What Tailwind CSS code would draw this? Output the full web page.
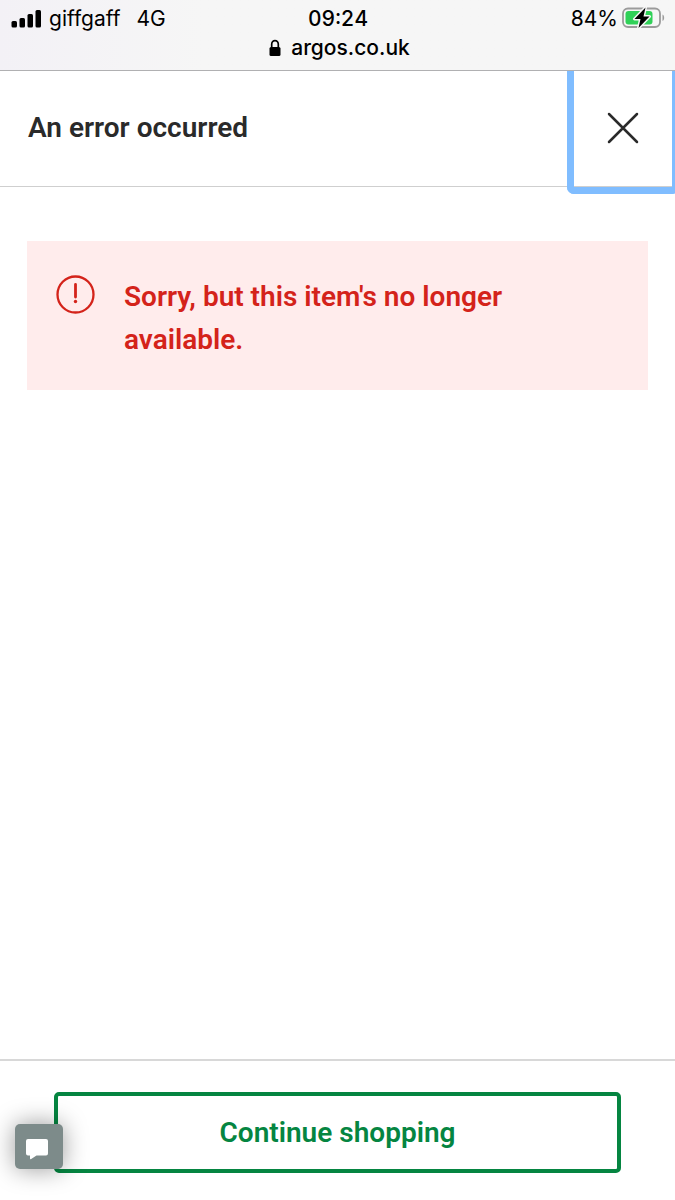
<!DOCTYPE html>
<html lang="en">
<head>
<meta charset="utf-8">
<meta name="viewport" content="width=device-width, initial-scale=1">
<title>An error occurred</title>
<script src="https://cdn.jsdelivr.net/npm/@tailwindcss/browser@4"></script>
</head>
<body class="flex min-h-screen flex-col overflow-x-hidden bg-white font-['Roboto',sans-serif] text-[#2a2a2a]">
  <!-- Phone status bar -->
  <div class="relative z-10 h-[71px] border-b border-[#b0b0b2] bg-linear-to-r from-[#f3f1f6] to-[#f6f6f6] to-30% pt-[5px] font-['Inter',sans-serif] text-black">
    <div class="grid grid-cols-3 items-center pr-[10px] pl-[11px] text-[21px] leading-7">
      <div class="flex items-center gap-2 whitespace-nowrap">
        <svg class="h-5 w-[30px] shrink-0 -mt-[3px]" viewBox="0 0 30 20" aria-hidden="true">
          <rect x="0.500" y="13" width="5.500" height="6.500" rx="1.500"/>
          <rect x="8.500" y="10" width="5.500" height="9.500" rx="1.500"/>
          <rect x="16.500" y="6" width="5.500" height="13.500" rx="1.500"/>
          <rect x="24.500" y="2" width="5.500" height="17.500" rx="1.500"/>
        </svg>
        <span>giffgaff</span>
        <span class="ml-2">4G</span>
      </div>
      <div class="text-center font-medium tabular-nums">09:24</div>
      <div class="flex items-center justify-end gap-[3px]">
        <span>84%</span>
        <svg class="h-6 w-[44px] shrink-0 -mt-[3px]" viewBox="0 0 44 24" role="img" aria-label="Charging">
          <rect x="2" y="2.500" width="37" height="18.500" rx="5" fill="none" stroke="#9b9b9b" stroke-width="1.800"/>
          <path d="M41.500 8.500c2.200.8 2.200 5.700 0 6.500z" fill="#9b9b9b"/>
          <rect x="4.500" y="5" width="27" height="13.500" rx="3" fill="#30d158"/>
          <path d="M24.500 1.500 13.500 13h6L17.500 22 28.500 10.500h-6z" fill="#000" stroke="#f6f6f6" stroke-width="3" stroke-linejoin="round" paint-order="stroke"/>
        </svg>
      </div>
    </div>
    <div class="flex items-center justify-center gap-[10px] pl-1 text-[21px] leading-[30px] font-medium">
      <svg class="h-[18px] w-3" viewBox="0 0 12 18" aria-hidden="true">
        <rect x="0.500" y="8" width="11" height="9" rx="1.500"/>
        <path d="M2.700 8V5.200a3.300 3.600 0 0 1 6.600 0V8" fill="none" stroke="#000" stroke-width="1.700"/>
      </svg>
      <span>argos.co.uk</span>
    </div>
  </div>

  <header class="flex h-[116px] border-b border-[#cfcfcf]">
    <h1 class="flex flex-1 items-center pb-[2px] pl-7 text-[28px] leading-9 font-semibold">An error occurred</h1>
    <button type="button" aria-label="Close" class="-mr-1 -mb-2 flex w-[112px] items-center justify-center rounded-b-[7px] border-x-[7px] border-b-[7px] border-[#80bdff] pb-[2px]">
      <svg class="h-8 w-8" viewBox="0 0 32 32" fill="none" stroke="#2a2a2a" stroke-width="2.500" stroke-linecap="round" aria-hidden="true">
        <path d="M2 2l28 28M30 2 2 30"/>
      </svg>
    </button>
  </header>

  <main class="flex-1 px-[27px] pt-[54px]">
    <div role="alert" class="flex gap-7 bg-[#ffecec] px-[29px] pt-[34px] pb-[29px] text-[#d4231a]">
      <svg class="h-[40px] w-[40px] shrink-0" viewBox="0 0 40 40" fill="none" stroke="currentColor" aria-hidden="true">
        <circle cx="19.500" cy="19.500" r="18" stroke-width="2.300"/>
        <path d="M19.500 9.500v12.500" stroke-width="2.800" stroke-linecap="round"/>
        <circle cx="19.500" cy="26.500" r="1.700" fill="currentColor" stroke="none"/>
      </svg>
      <p class="max-w-[400px] text-[28px] leading-[43px] font-semibold">Sorry, but this item's no longer available.</p>
    </div>
  </main>

  <footer class="relative border-t-2 border-[#d8d8d8] px-[54px] pt-[31px] pb-[27px]">
    <button type="button" class="h-[81px] w-full rounded-[5px] border-4 border-[#058541] text-[28px] leading-9 font-semibold text-[#058541]">Continue shopping</button>
    <button type="button" aria-label="Open chat" class="absolute bottom-[31px] left-[15px] flex h-[45px] w-12 items-center justify-center rounded-[5px] bg-[#7d8b8a] shadow-[0_0_24px_rgba(0,0,0,0.4)]">
      <svg class="mt-1 mr-[5px] h-[22px] w-[22px]" viewBox="0 0 22 22" fill="#fff" aria-hidden="true">
        <path d="M2 1h18q2 0 2 2v12.500q0 2-2 2H10.500L5.200 21q-1.200.7-1.200-.7v-2.800H2q-2 0-2-2V3q0-2 2-2z"/>
      </svg>
    </button>
  </footer>
</body>
</html>
